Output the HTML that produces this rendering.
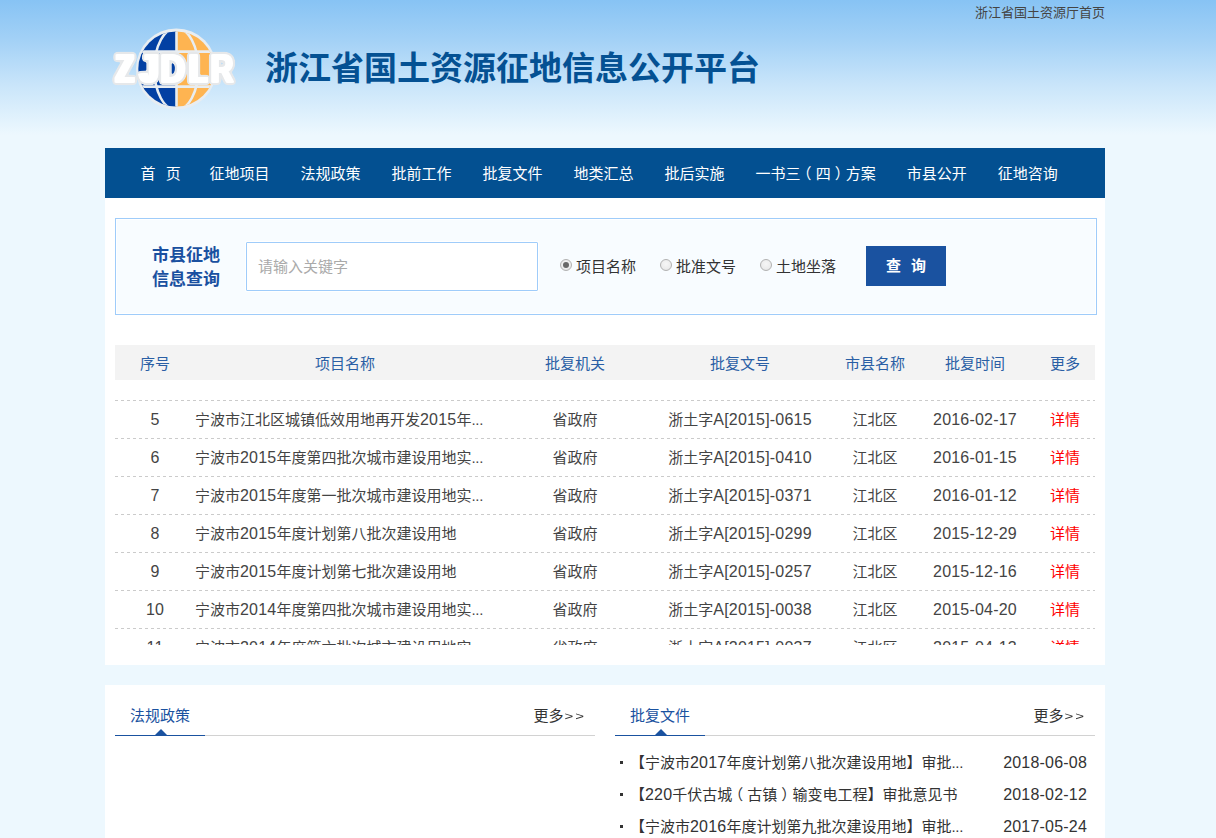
<!DOCTYPE html>
<html lang="zh-CN">
<head>
<meta charset="utf-8">
<title>浙江省国土资源征地信息公开平台</title>
<style>
*{margin:0;padding:0;box-sizing:border-box;}
html,body{width:1216px;height:838px;overflow:hidden;}
body{font-family:"Liberation Sans","Noto Sans CJK SC",sans-serif;font-size:15px;color:#333;background:#edf8fe;position:relative;}
a{text-decoration:none;color:inherit;}
ul{list-style:none;}
.topbg{position:absolute;left:0;top:0;width:1216px;height:140px;background:linear-gradient(to bottom,#87c3f4 0,#a3d1f6 40px,#c9e5fa 85px,#edf8fe 135px);}
.wrap{position:absolute;left:105px;top:0;width:1000px;height:838px;}
.toplink{position:absolute;right:0;top:4px;font-size:13px;line-height:18px;color:#444;}
.logo{position:absolute;left:0px;top:22px;width:135px;height:92px;}
h1.title{position:absolute;left:160px;top:45px;font-size:33px;line-height:48px;font-weight:bold;color:#045193;letter-spacing:0;white-space:nowrap;}
nav{position:absolute;left:0;top:148px;width:1000px;height:50px;background:#035091;}
nav ul{display:block;height:50px;padding-left:20px;white-space:nowrap;font-size:0;}
nav li{display:inline-block;height:50px;line-height:52px;vertical-align:top;font-size:15px;color:#fff;padding:0 15.5px;}
nav li span{position:relative;}nav li .pl{left:-4px;}nav li .pr{left:4px;}
nav li.home{width:69px;padding:0 0 0 15.5px;text-align:left;word-spacing:6px;}
.main{position:absolute;left:0;top:198px;width:1000px;height:467px;background:#fff;}
.search{position:absolute;left:10px;top:20px;width:982px;height:97px;border:1px solid #9fccfa;background:#f8fcff;box-shadow:inset 0 0 0 1px #fff;}
.search .lbl{position:absolute;left:20px;top:25px;width:100px;text-align:center;font-size:17px;line-height:24px;font-weight:bold;color:#1a50a0;}
.search .inp{position:absolute;left:130px;top:23px;width:292px;height:49px;border:1px solid #9fccfa;border-radius:1px;box-shadow:0 0 0 1px #fff;background:#fff;padding-left:11px;line-height:47px;font-size:15px;color:#aaa;}
.search .rd{position:absolute;top:37px;height:22px;line-height:22px;font-size:15px;color:#333;white-space:nowrap;}
.search .rd i{display:inline-block;width:12px;height:12px;border-radius:50%;border:1px solid #b2b2b2;background:radial-gradient(circle at 50% 40%,#f6f6f6 0,#ececec 60%,#dcdcdc 100%);vertical-align:middle;margin-right:4px;position:relative;top:-3px;}
.search .rd i.on:after{content:"";position:absolute;left:2px;top:2px;width:6px;height:6px;border-radius:50%;background:#686868;}
.search .btn{position:absolute;left:750px;top:27px;width:80px;height:40px;background:#1a52a0;color:#fff;font-size:15px;font-weight:bold;line-height:40px;text-align:center;word-spacing:6px;}
table{border-collapse:collapse;table-layout:fixed;}
.thead{position:absolute;left:10px;top:147px;width:980px;height:35px;background:#f3f3f3;}
.thead table{width:980px;}
.thead th{height:35px;font-weight:normal;font-size:15px;color:#2a5fa5;text-align:center;}
.tbody{position:absolute;left:10px;top:182px;width:980px;height:265px;overflow:hidden;}
.tbody table{width:980px;margin-top:-17px;}
.tbody td{height:38px;line-height:38px;font-size:15px;color:#444;text-align:center;white-space:nowrap;overflow:hidden;}
.tbody td.nm{text-align:left;}
.tbody td:last-child{padding-left:10px;}
.thead th:last-child{padding-left:10px;}
.tbody .ln{position:absolute;left:0;width:980px;height:1px;background:repeating-linear-gradient(to right,#cbcbcb 0,#cbcbcb 3px,transparent 3px,transparent 6px);}
.n{font-size:16px;letter-spacing:0.2px;}
.e{letter-spacing:-0.25px;}
.tbody td a.more{color:#f00;}
.panel{position:absolute;left:0;top:685px;width:1000px;height:160px;background:#fff;}
.box{position:absolute;top:0;width:480px;}
.box .hd{position:relative;height:51px;border-bottom:1px solid #d2d2d2;}
.box .hd h3{position:absolute;left:0;top:16px;width:90px;height:35px;border-bottom:1px solid #1a52a0;font-weight:normal;font-size:15px;line-height:30px;color:#1a52a0;text-align:center;}
.box .hd h3:after{content:"";position:absolute;left:39.5px;bottom:0;border:6px solid transparent;border-bottom:6px solid #1a52a0;border-top:0;}
.box .hd .mr{position:absolute;right:9px;top:21px;font-size:15px;line-height:20px;color:#333;}
.box ul{margin-top:10px;}
.box li{position:relative;height:32px;line-height:34px;font-size:15px;color:#333;padding-left:15px;white-space:nowrap;}
.box li:before{content:"";position:absolute;left:5px;top:15px;width:3px;height:3px;background:#333;}
.box li span.d{position:absolute;right:8px;top:0;}
.box li .pl{position:relative;left:-4px;}.box li .pr{position:relative;left:4px;}
.gt{display:inline-block;letter-spacing:2px;transform:scaleY(.78);transform-origin:50% 58%;margin-left:1px;}
</style>
</head>
<body>
<div class="topbg"></div>
<div class="wrap">
  <a class="toplink" href="#">浙江省国土资源厅首页</a>
  <svg class="logo" viewBox="0 0 135 92">
    <ellipse cx="71.3" cy="47" rx="40.3" ry="40.5" fill="#e8edf1"/>
    <clipPath id="gc"><ellipse cx="71.3" cy="47" rx="38" ry="37.6"/></clipPath>
    <g clip-path="url(#gc)">
      <rect x="30" y="0" width="41.3" height="92" fill="#0340a3"/>
      <rect x="71.3" y="0" width="45" height="92" fill="#feb451"/>
      <g fill="none" stroke="#e8edf1" stroke-width="2.6">
        <line x1="71.5" y1="0" x2="71.5" y2="92"/>
        <line x1="30" y1="29.6" x2="112" y2="29.6"/>
        <line x1="30" y1="64.6" x2="112" y2="64.6"/>
        <ellipse cx="71.3" cy="47" rx="22" ry="41"/>
      </g>
    </g>
    <filter id="lf" x="-30%" y="-30%" width="160%" height="160%">
      <feOffset in="SourceAlpha" dx="-2" dy="0" result="a0"/>
      <feOffset in="SourceAlpha" dx="-1" dy="0" result="a1"/>
      <feOffset in="SourceAlpha" dx="1" dy="0" result="a2"/>
      <feOffset in="SourceAlpha" dx="2" dy="0" result="a3"/>
      <feMerge result="fat"><feMergeNode in="a0"/><feMergeNode in="a1"/><feMergeNode in="SourceAlpha"/><feMergeNode in="a2"/><feMergeNode in="a3"/></feMerge>
      <feGaussianBlur in="fat" stdDeviation="1.4" result="ol1"/>
      <feComponentTransfer in="ol1" result="ol"><feFuncA type="linear" slope="14" intercept="-0.4"/></feComponentTransfer>
      <feFlood flood-color="#e6e8ea" result="gc"/><feComposite in="gc" in2="ol" operator="in" result="o"/>
      <feFlood flood-color="#ffffff" result="wc"/><feComposite in="wc" in2="fat" operator="in" result="w"/>
      <feMerge><feMergeNode in="o"/><feMergeNode in="w"/></feMerge>
    </filter>
    <filter id="lf1" x="-30%" y="-30%" width="160%" height="160%">
      <feOffset in="SourceAlpha" dx="-1" dy="0" result="a1"/>
      <feOffset in="SourceAlpha" dx="1" dy="0" result="a2"/>
      <feMerge result="fat"><feMergeNode in="a1"/><feMergeNode in="SourceAlpha"/><feMergeNode in="a2"/></feMerge>
      <feGaussianBlur in="fat" stdDeviation="1.4" result="ol1"/>
      <feComponentTransfer in="ol1" result="ol"><feFuncA type="linear" slope="14" intercept="-0.4"/></feComponentTransfer>
      <feFlood flood-color="#e6e8ea" result="gc"/><feComposite in="gc" in2="ol" operator="in" result="o"/>
      <feFlood flood-color="#ffffff" result="wc"/><feComposite in="wc" in2="fat" operator="in" result="w"/>
      <feMerge><feMergeNode in="o"/><feMergeNode in="w"/></feMerge>
    </filter>
    <g font-family="'Liberation Sans',sans-serif" font-weight="bold" font-size="38.7" fill="#fff" stroke="#fff" stroke-width="1.4" stroke-linejoin="round">
      <g filter="url(#lf)"><text transform="translate(11.15 59.8) scale(0.716 1)">Z</text></g>
      <g filter="url(#lf)"><text transform="translate(35.2 59.8) scale(0.83 1)">J</text></g>
      <g filter="url(#lf1)"><text transform="translate(55.6 59.8) scale(0.885 1)">D</text></g>
      <g filter="url(#lf)"><text transform="translate(84.76 59.8) scale(0.707 1)">L</text></g>
      <g filter="url(#lf1)"><text transform="translate(105.7 59.8) scale(0.80 1)">R</text></g>
    </g>
  </svg>
  <h1 class="title">浙江省国土资源征地信息公开平台</h1>
  <nav>
    <ul>
      <li class="home">首 页</li><li>征地项目</li><li>法规政策</li><li>批前工作</li><li>批复文件</li><li>地类汇总</li><li>批后实施</li><li>一书三<span class="pl">（</span>四<span class="pr">）</span>方案</li><li>市县公开</li><li>征地咨询</li>
    </ul>
  </nav>
  <div class="main">
    <div class="search">
      <div class="lbl">市县征地<br>信息查询</div>
      <div class="inp">请输入关键字</div>
      <label class="rd" style="left:444px"><i class="on"></i>项目名称</label>
      <label class="rd" style="left:544px"><i></i>批准文号</label>
      <label class="rd" style="left:644px"><i></i>土地坐落</label>
      <div class="btn">查 询</div>
    </div>
    <div class="thead">
      <table><colgroup><col style="width:80px"><col style="width:300px"><col style="width:160px"><col style="width:170px"><col style="width:100px"><col style="width:100px"><col style="width:70px"></colgroup>
        <tr><th>序号</th><th>项目名称</th><th>批复机关</th><th>批复文号</th><th>市县名称</th><th>批复时间</th><th>更多</th></tr>
      </table>
    </div>
    <div class="tbody">
      <div class="ln" style="top:20px"></div><div class="ln" style="top:58px"></div><div class="ln" style="top:96px"></div><div class="ln" style="top:134px"></div><div class="ln" style="top:172px"></div><div class="ln" style="top:210px"></div><div class="ln" style="top:248px"></div>
      <table><colgroup><col style="width:80px"><col style="width:300px"><col style="width:160px"><col style="width:170px"><col style="width:100px"><col style="width:100px"><col style="width:70px"></colgroup>
        <tr><td>&nbsp;</td><td class="nm">&nbsp;</td><td></td><td></td><td></td><td></td><td></td></tr>
        <tr><td><span class="n">5</span></td><td class="nm">宁波市江北区城镇低效用地再开发<span class="n">2015</span>年<span class="e">...</span></td><td>省政府</td><td>浙土字<span class="n">A[2015]-0615</span></td><td>江北区</td><td><span class="n">2016-02-17</span></td><td><a class="more" href="#">详情</a></td></tr>
        <tr><td><span class="n">6</span></td><td class="nm">宁波市<span class="n">2015</span>年度第四批次城市建设用地实<span class="e">...</span></td><td>省政府</td><td>浙土字<span class="n">A[2015]-0410</span></td><td>江北区</td><td><span class="n">2016-01-15</span></td><td><a class="more" href="#">详情</a></td></tr>
        <tr><td><span class="n">7</span></td><td class="nm">宁波市<span class="n">2015</span>年度第一批次城市建设用地实<span class="e">...</span></td><td>省政府</td><td>浙土字<span class="n">A[2015]-0371</span></td><td>江北区</td><td><span class="n">2016-01-12</span></td><td><a class="more" href="#">详情</a></td></tr>
        <tr><td><span class="n">8</span></td><td class="nm">宁波市<span class="n">2015</span>年度计划第八批次建设用地</td><td>省政府</td><td>浙土字<span class="n">A[2015]-0299</span></td><td>江北区</td><td><span class="n">2015-12-29</span></td><td><a class="more" href="#">详情</a></td></tr>
        <tr><td><span class="n">9</span></td><td class="nm">宁波市<span class="n">2015</span>年度计划第七批次建设用地</td><td>省政府</td><td>浙土字<span class="n">A[2015]-0257</span></td><td>江北区</td><td><span class="n">2015-12-16</span></td><td><a class="more" href="#">详情</a></td></tr>
        <tr><td><span class="n">10</span></td><td class="nm">宁波市<span class="n">2014</span>年度第四批次城市建设用地实<span class="e">...</span></td><td>省政府</td><td>浙土字<span class="n">A[2015]-0038</span></td><td>江北区</td><td><span class="n">2015-04-20</span></td><td><a class="more" href="#">详情</a></td></tr>
        <tr><td><span class="n">11</span></td><td class="nm">宁波市<span class="n">2014</span>年度第六批次城市建设用地实<span class="e">...</span></td><td>省政府</td><td>浙土字<span class="n">A[2015]-0037</span></td><td>江北区</td><td><span class="n">2015-04-13</span></td><td><a class="more" href="#">详情</a></td></tr>
      </table>
    </div>
  </div>
  <div class="panel">
    <div class="box" style="left:10px">
      <div class="hd"><h3>法规政策</h3><a class="mr" href="#">更多<span class="gt">&gt;&gt;</span></a></div>
    </div>
    <div class="box" style="left:510px">
      <div class="hd"><h3>批复文件</h3><a class="mr" href="#">更多<span class="gt">&gt;&gt;</span></a></div>
      <ul>
        <li>【宁波市<span class="n">2017</span>年度计划第八批次建设用地】审批<span class="e">...</span><span class="d n">2018-06-08</span></li>
        <li>【<span class="n">220</span>千伏古城<span class="pl">（</span>古镇<span class="pr">）</span>输变电工程】审批意见书<span class="d n">2018-02-12</span></li>
        <li>【宁波市<span class="n">2016</span>年度计划第九批次建设用地】审批<span class="e">...</span><span class="d n">2017-05-24</span></li>
      </ul>
    </div>
  </div>
</div>
</body>
</html>
